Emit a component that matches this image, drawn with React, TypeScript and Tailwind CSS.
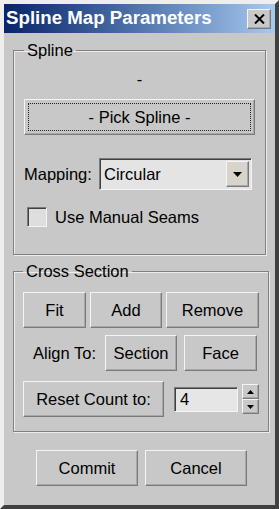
const raised =
  "border border-t-[#f4f4f4] border-l-[#f4f4f4] border-r-[#7a7a7a] border-b-[#7a7a7a] shadow-[inset_-1px_-1px_0_#a8a8a8] bg-[#c8c8c8]";
const sunken =
  "border border-t-[#7a7a7a] border-l-[#7a7a7a] border-r-[#f4f4f4] border-b-[#f4f4f4] shadow-[inset_1px_1px_0_#404040]";

function Btn({ label, className = "" }: { label: string; className?: string }) {
  return (
    <button className={`${raised} flex h-[36px] items-center justify-center ${className}`}>
      {label}
    </button>
  );
}

function Group({ title, className = "", children }: { title: string; className?: string; children: React.ReactNode }) {
  return (
    <fieldset
      className={`border border-[#808080] shadow-[inset_1px_1px_0_#ececec,1px_1px_0_#ececec] ${className}`}
    >
      <legend className="px-[3px] leading-[18px]">{title}</legend>
      {children}
    </fieldset>
  );
}

export default function App() {
  return (
    <div
      className="flex h-[509px] w-[279px] flex-col border-[4px] border-t-[#eeeeee] border-l-[#eeeeee] border-r-[#404040] border-b-[#404040] bg-[#c8c8c8] text-[16.5px] text-black"
      style={{ fontFamily: '"Liberation Sans", Arial, sans-serif' }}
    >
      {/* title bar */}
      <div className="flex h-[29px] shrink-0 items-center justify-between bg-gradient-to-r from-[#0a246a] to-[#a6caf0] pl-[2px] pr-[4px]">
        <span className="text-[18.7px] font-bold text-white">Spline Map Parameters</span>
        <div className={`${raised} flex h-[20px] w-[24px] items-center justify-center`}>
          <svg width="11" height="10" viewBox="0 0 11 10">
            <path d="M1 0.5 L10 9.5 M10 0.5 L1 9.5" stroke="#000" strokeWidth="2" />
          </svg>
        </div>
      </div>

      {/* Spline group */}
      <Group title="Spline" className="mx-[9px] mt-[8px] px-[10px] pb-[27px]">
        <div className="mt-[11px] text-center leading-[18px]">-</div>
        <button className={`${raised} mt-[11px] flex h-[36px] w-full items-center justify-center p-[3px]`}>
          <span className="flex h-full w-full items-center justify-center border border-dotted border-[#222]">
            - Pick Spline -
          </span>
        </button>
        <div className="mt-[23px] flex h-[32px] items-center">
          <span className="w-[75px]">Mapping:</span>
          <div className={`${sunken} flex h-full w-[153px] items-center justify-between bg-[#e4e4e4] pl-[4px] pr-[2px]`}>
            <span>Circular</span>
            <div className={`${raised} flex h-[26px] w-[23px] items-center justify-center bg-[#d8d4cc]`}>
              <svg width="9" height="5" viewBox="0 0 9 5">
                <path d="M0 0 H9 L4.5 5 Z" fill="#000" />
              </svg>
            </div>
          </div>
        </div>
        <div className="mt-[17px] flex h-[20px] items-center pl-[3px]">
          <div className={`${sunken} h-[20px] w-[20px] bg-[#dedede]`} />
          <span className="ml-[8px]">Use Manual Seams</span>
        </div>
      </Group>

      {/* Cross Section group */}
      <Group title="Cross Section" className="ml-[9px] mr-[11px] mt-[7px] px-[9px] pb-[14px]">
        <div className="mt-[12px] flex gap-[4px]">
          <Btn label="Fit" className="w-[63px]" />
          <Btn label="Add" className="w-[72px]" />
          <Btn label="Remove" className="w-[93px]" />
        </div>
        <div className="mt-[7px] flex items-center">
          <span className="ml-[10px] w-[72px]">Align To:</span>
          <Btn label="Section" className="w-[72px]" />
          <Btn label="Face" className="ml-[7px] w-[73px]" />
        </div>
        <div className="mt-[10px] flex items-center">
          <Btn label="Reset Count to:" className="w-[141px]" />
          <div className={`${sunken} ml-[10px] flex h-[25px] w-[64px] items-center bg-[#e6e6e6] pl-[5px]`}>4</div>
          <div className="ml-[4px] flex h-[30px] w-[17px] flex-col">
            <div className={`${raised} flex flex-1 items-center justify-center`}>
              <svg width="7" height="4" viewBox="0 0 7 4">
                <path d="M0 4 H7 L3.5 0 Z" fill="#000" />
              </svg>
            </div>
            <div className={`${raised} flex flex-1 items-center justify-center`}>
              <svg width="7" height="4" viewBox="0 0 7 4">
                <path d="M0 0 H7 L3.5 4 Z" fill="#000" />
              </svg>
            </div>
          </div>
        </div>
      </Group>

      <div className="mt-[18px] flex gap-[7px] pl-[32px]">
        <Btn label="Commit" className="w-[102px]" />
        <Btn label="Cancel" className="w-[102px]" />
      </div>
    </div>
  );
}
